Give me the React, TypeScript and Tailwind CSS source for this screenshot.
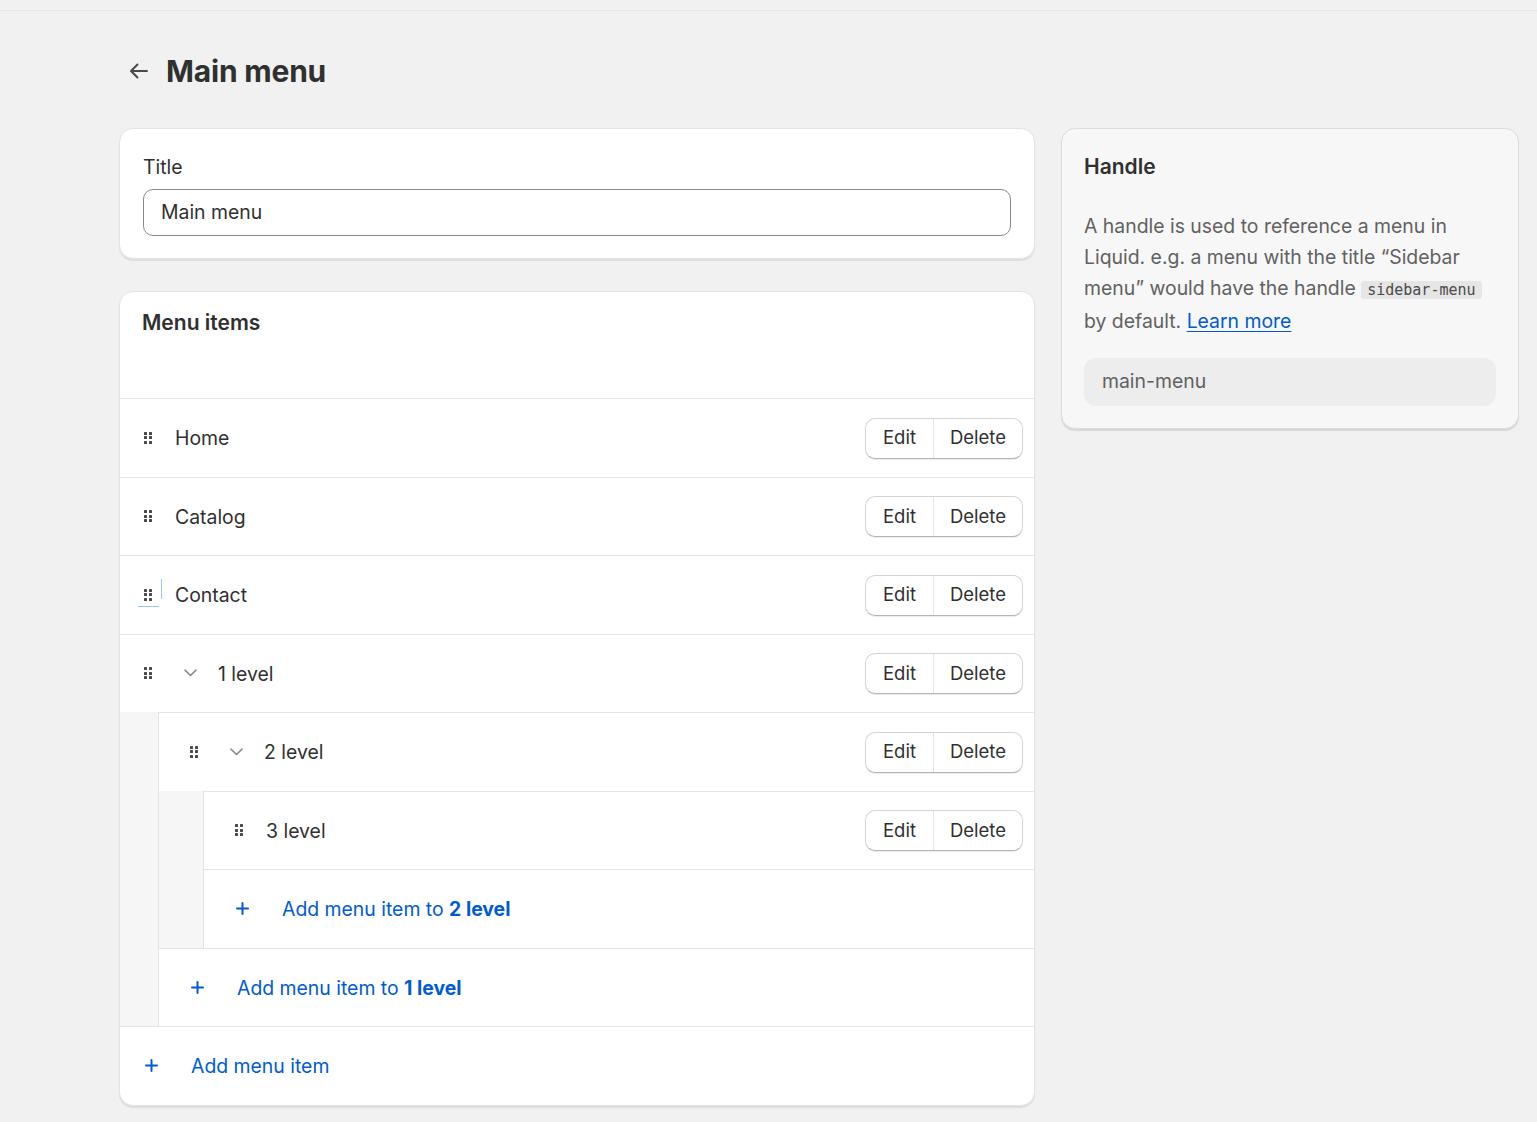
import React from "react";

const font = { fontFamily: "Inter, 'Noto Sans', sans-serif" };

function DragHandle() {
  return (
    <div className="grid grid-cols-2 gap-x-[2px] gap-y-[1.5px] w-[8px] shrink-0">
      {Array.from({ length: 6 }).map((_, i) => (
        <span key={i} className="block w-[3px] h-[3px] bg-[#4a4a4a] rounded-[0.5px]" />
      ))}
    </div>
  );
}

function Chevron() {
  return (
    <svg width="13" height="8" viewBox="0 0 13 8" fill="none" className="shrink-0">
      <path d="M1 1.2 L6.5 6.5 L12 1.2" stroke="#8a8a8a" strokeWidth="1.6" strokeLinecap="round" strokeLinejoin="round" />
    </svg>
  );
}

function Plus() {
  return (
    <svg width="13" height="13" viewBox="0 0 13 13" fill="none" className="shrink-0">
      <path d="M6.5 1 V12 M1 6.5 H12" stroke="#005bd3" strokeWidth="2" strokeLinecap="round" />
    </svg>
  );
}

function Buttons() {
  return (
    <div className="flex h-[41px] rounded-[10px] border border-[#d4d4d4] border-b-[#b5b5b5] bg-white shadow-[0_1px_0_rgba(0,0,0,0.08)] text-[18.5px] text-[#303030] overflow-hidden">
      <div className="w-[67px] flex items-center justify-center">Edit</div>
      <div className="w-[89px] flex items-center justify-center border-l border-[#e3e3e3]">Delete</div>
    </div>
  );
}

function Row({
  label,
  pl,
  chevron,
  focus,
}: {
  label: string;
  pl: string;
  chevron?: boolean;
  focus?: boolean;
}) {
  return (
    <div className={`h-[78.5px] border-t border-[#e3e3e3] flex items-center pr-[11px] ${pl}`}>
      <div className="relative flex items-center">
        <DragHandle />
        {focus && (
          <>
            <span className="absolute left-[17px] top-[-10px] w-px h-[20px] bg-[#9cc3f5]" />
            <span className="absolute left-[-6px] top-[17px] h-px w-[21px] bg-[#9cc3f5]" />
          </>
        )}
      </div>
      {chevron ? (
        <>
          <div className="ml-[32px]">
            <Chevron />
          </div>
          <span className="ml-[21px] pt-[2px] text-[19.4px] text-[#303030]">{label}</span>
        </>
      ) : (
        <span className="ml-[23px] pt-[2px] text-[19.4px] text-[#303030]">{label}</span>
      )}
      <div className="ml-auto pt-[1px]">
        <Buttons />
      </div>
    </div>
  );
}

function AddRow({ pl, children }: { pl: string; children: React.ReactNode }) {
  return (
    <div className={`h-[78.5px] border-t border-[#e3e3e3] flex items-center ${pl}`}>
      <Plus />
      <span className="ml-[33px] pt-[2px] text-[19.4px] text-[#005bd3]">{children}</span>
    </div>
  );
}

export default function App() {
  return (
    <div style={font} className="min-h-[1122px] bg-[#f1f1f1] text-[#303030]">
      <div className="h-[11px] border-b border-[#e6e6e6]" />
      <div className="pl-[119px] pt-[37px] flex items-center h-[45px] box-content">
        <svg width="24" height="24" viewBox="0 0 24 24" fill="none" className="ml-[8px]">
          <path d="M20 12 H4.5 M10.5 5.5 L4 12 L10.5 18.5" stroke="#4a4a4a" strokeWidth="2" strokeLinecap="round" strokeLinejoin="round" />
        </svg>
        <h1 className="ml-[15px] text-[30px] font-bold text-[#303030] leading-none tracking-[-0.2px]">Main menu</h1>
      </div>
      <div className="pl-[119px] pt-[35px] flex gap-[26px] items-start">
        <div className="w-[916px] flex flex-col gap-[32px]">
          <div className="bg-white rounded-[14px] border border-[#e3e3e3] shadow-[0_2px_1px_rgba(0,0,0,0.08)] px-[23px] pt-[24px] pb-[22px]">
            <div className="text-[19.4px] text-[#303030] leading-[28px]">Title</div>
            <div className="mt-[8px] h-[47px] rounded-[10px] border border-[#8a8a8a] flex items-center px-[17px] text-[19.4px] text-[#303030]">
              Main menu
            </div>
          </div>
          <div className="bg-white rounded-[14px] border border-[#e3e3e3] shadow-[0_2px_1px_rgba(0,0,0,0.08)] overflow-hidden">
            <div className="px-[22px] pt-[17px] h-[106px] text-[21px] font-semibold text-[#303030] leading-[28px]">
              Menu items
            </div>
            <Row label="Home" pl="pl-[24px]" />
            <Row label="Catalog" pl="pl-[24px]" />
            <Row label="Contact" pl="pl-[24px]" focus />
            <Row label="1 level" pl="pl-[24px]" chevron />
            <div className="bg-[#f6f6f6] pl-[38px]">
              <div className="bg-white border-l border-[#e3e3e3]">
                <Row label="2 level" pl="pl-[31px]" chevron />
                <div className="bg-[#f6f6f6] pl-[44px]">
                  <div className="bg-white border-l border-[#e3e3e3]">
                    <Row label="3 level" pl="pl-[31px]" />
                    <AddRow pl="pl-[32px]">
                      Add menu item to <b className="font-bold">2 level</b>
                    </AddRow>
                  </div>
                </div>
                <AddRow pl="pl-[32px]">
                  Add menu item to <b className="font-bold">1 level</b>
                </AddRow>
              </div>
            </div>
            <AddRow pl="pl-[25px]">Add menu item</AddRow>
          </div>
        </div>
        <div className="w-[458px] bg-[#f7f7f7] rounded-[14px] border border-[#dcdcdc] shadow-[0_2px_1px_rgba(0,0,0,0.1)] px-[22px] pt-[24px] pb-[22px]">
          <div className="text-[21px] font-semibold text-[#303030] leading-[28px]">Handle</div>
          <p className="mt-[30px] text-[19.4px] leading-[31px] text-[#616161]">
            A handle is used to reference a menu in Liquid. e.g. a menu with the title “Sidebar menu” would have the handle{" "}
            <code
              className="bg-[#e6e6e6] rounded-[3px] px-[6px] py-0 text-[15px] text-[#4a4a4a]"
              style={{ fontFamily: "'DejaVu Sans Mono', 'Liberation Mono', monospace" }}
            >
              sidebar-menu
            </code>{" "}
            by default. <span className="text-[#005bd3] underline underline-offset-[3px]">Learn more</span>
          </p>
          <div className="mt-[21px] h-[48px] rounded-[12px] bg-[#ededed] flex items-center px-[18px] text-[19.4px] text-[#616161]">
            main-menu
          </div>
        </div>
      </div>
    </div>
  );
}
